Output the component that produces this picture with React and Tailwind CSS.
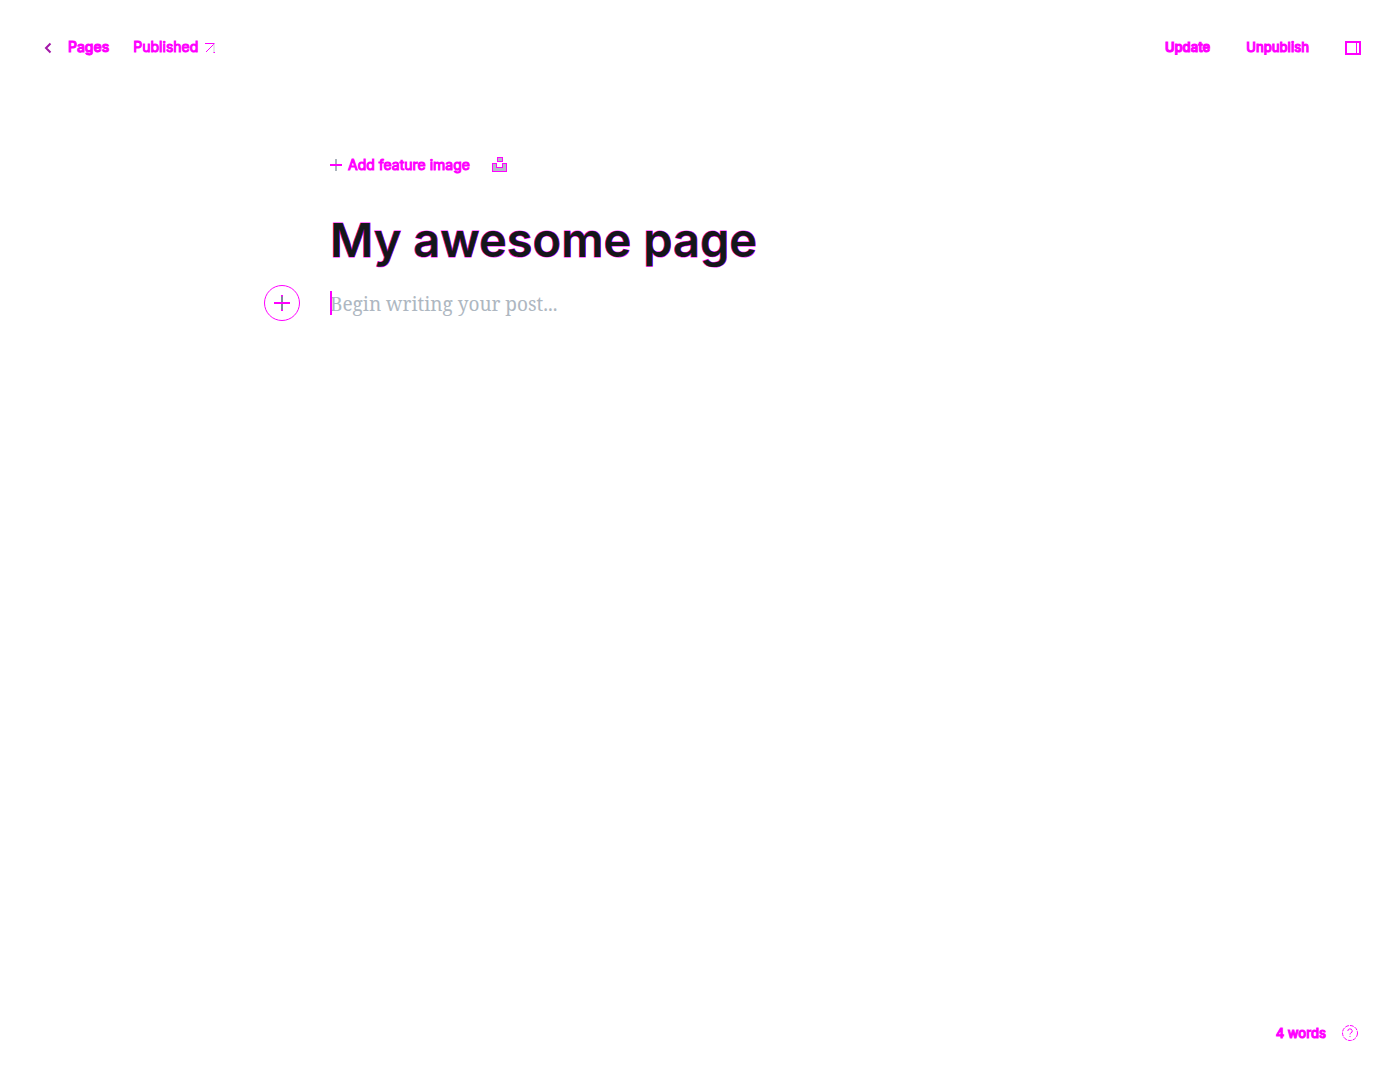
import React from "react";

function ChevronLeft() {
  return (
    <svg width="8" height="12" viewBox="0 0 8 12" fill="none" aria-hidden="true">
      <path d="M6.5 1.5 2 6l4.500 4.500" stroke="#a318a8" strokeWidth="2" />
    </svg>
  );
}

function ArrowUpRight() {
  return (
    <svg width="10" height="10" viewBox="0 0 10 10" fill="none" aria-hidden="true">
      <path d="M0 .5h9.500M1 9l8-8" stroke="#ff00ff" />
      <path d="M9 1v9" stroke="#ced4d9" />
      <path d="M8.500 9.500h1.500" stroke="#ff00ff" />
    </svg>
  );
}

function SidebarIcon() {
  return (
    <svg width="16" height="14" viewBox="0 0 16 14" fill="none" stroke="#ff00ff" aria-hidden="true">
      <rect x="1" y="1" width="14" height="12" strokeWidth="2" />
      <path d="M11.500 1v12" />
    </svg>
  );
}

function PhotoStackIcon() {
  return (
    <svg width="15" height="15" viewBox="0 0 15 15" fill="#b4bdc8" stroke="#ff00ff" shapeRendering="crispEdges" aria-hidden="true">
      <path d="M5.500.5h5v4h-5zM.5 6.500h4v4h6v-4h4v8H.5z" />
    </svg>
  );
}

export default function App() {
  return (
    <div className="flex min-h-screen flex-col bg-white font-['Inter',sans-serif] text-sm text-[#ff00ff]">
      <header className="flex h-24 items-center justify-between pr-[39px] pl-11">
        <nav className="flex items-center gap-6">
          <a href="#pages" className="flex items-center gap-4 font-medium [-webkit-text-stroke:1px_#ff00ff]">
            <ChevronLeft />
            <span className="pb-0.5">Pages</span>
          </a>
          <a href="#published" className="flex items-center gap-[7px] [-webkit-text-stroke:1px_#ff00ff]">
            <span className="pb-0.5">Published</span>
            <ArrowUpRight />
          </a>
        </nav>
        <div className="flex items-center gap-9">
          <button type="button" className="pb-px text-[13px] font-semibold [-webkit-text-stroke:1px_#ff00ff]">Update</button>
          <button type="button" className="pb-px text-[13px] font-medium [-webkit-text-stroke:1px_#ff00ff]">Unpublish</button>
          <button type="button" aria-label="Settings"><SidebarIcon /></button>
        </div>
      </header>

      <main className="mx-auto flex w-full max-w-[740px] grow flex-col pt-14">
        <div className="flex h-[26px] items-center gap-[22px]">
          <button type="button" className="flex items-center gap-1.5 [-webkit-text-stroke:1px_#ff00ff]">
            <svg width="12" height="12" viewBox="0 0 12 12" aria-hidden="true">
              <path d="M6 0v12" stroke="#aab3bd" strokeWidth="2" />
              <path d="M0 6h12" stroke="#ff00ff" strokeWidth="2" />
            </svg>
            Add feature image
          </button>
          <button type="button" aria-label="Choose a stock photo" className="pb-0.5"><PhotoStackIcon /></button>
        </div>
        <input
          aria-label="Page title"
          defaultValue="My awesome page"
          className="mt-[30px] h-16 w-full bg-transparent text-[47px] font-semibold text-[#15171a] outline-none [-webkit-text-stroke:1px_#ff00ff] [paint-order:stroke]"
        />
        <div className="relative mt-[15px] flex items-center">
          <button
            type="button"
            aria-label="Add a card"
            className="absolute right-full mr-[30px] flex size-9 items-center justify-center rounded-full border border-[#ff00ff]"
          >
            <svg width="16" height="16" viewBox="0 0 16 16" aria-hidden="true">
              <path d="M8 0v16" stroke="#7c8b9a" strokeWidth="2" />
              <path d="M0 8h16M7 .5h2M7 15.500h2" stroke="#ff00ff" strokeWidth="2" />
            </svg>
          </button>
          <span className="absolute left-0 h-6 w-0.5 bg-[#ff00ff]" />
          <input
            aria-label="Page content"
            placeholder="Begin writing your post..."
            className="h-8 w-full bg-transparent pt-0.5 font-['Noto_Serif','Liberation_Serif',serif] text-[19px] text-[#15171a] outline-none placeholder:text-[#aeb7c1]"
          />
        </div>
      </main>

      <footer className="flex h-[94px] items-center justify-end gap-4 pr-[42px]">
        <span className="text-[13px] font-medium [-webkit-text-stroke:1px_#ff00ff]">4 words</span>
        <a href="#help" aria-label="Help">
          <svg width="16" height="16" viewBox="0 0 16 16" fill="none" stroke="#ff00ff" aria-hidden="true">
            <circle cx="8" cy="8" r="7.500" strokeDasharray="4 1" />
            <path d="M5.800 6a2.200 2.200 0 1 1 3 2.100c-.6.3-.8.6-.8 1.400M8 11v1" />
          </svg>
        </a>
      </footer>
    </div>
  );
}
